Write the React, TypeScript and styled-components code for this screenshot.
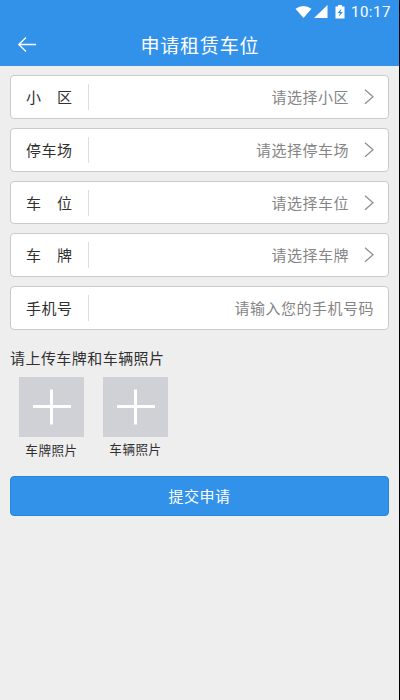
import React from "react";
import styled, { createGlobalStyle } from "styled-components";

const GlobalStyle = createGlobalStyle`
  * { box-sizing: border-box; }
  html, body { margin: 0; padding: 0; background: #eeeeee; }
  body { font-family: "Noto Sans CJK SC", sans-serif; overflow: hidden; }
`;

const Screen = styled.div`
  width: 400px;
  height: 700px;
  display: flex;
  flex-direction: column;
  background: #eeeeee;
  border-right: 1px solid #000;
`;

const Top = styled.header`
  flex: none;
  height: 66px;
  background: #3292ea;
  color: #fff;
`;

const StatusBar = styled.div`
  height: 23px;
  display: flex;
  justify-content: flex-end;
  align-items: center;
  padding-right: 8px;

  svg { display: block; }
`;

const Clock = styled.span`
  margin-left: 5px;
  width: 40px;
  font: 400 15px/22px Roboto, sans-serif;
  letter-spacing: 0.5px;
  white-space: nowrap;
`;

const NavBar = styled.div`
  height: 43px;
  display: grid;
  grid-template-columns: 54px 1fr 54px;
  align-items: center;
`;

const Back = styled.button`
  border: 0;
  background: none;
  padding: 0 0 0 17px;
  height: 43px;
  display: flex;
  align-items: center;

  svg { display: block; }
`;

const Title = styled.h1`
  margin: 0;
  font-size: 19px;
  letter-spacing: 0.8px;
  text-indent: 0.8px;
  font-weight: 400;
  line-height: 43px;
  text-align: center;
`;

const Form = styled.main`
  display: flex;
  flex-direction: column;
  padding: 9.4px 10px 0;
`;

const Fields = styled.div`
  display: flex;
  flex-direction: column;
  gap: 9.2px;
`;

const Field = styled.div`
  height: 43.5px;
  display: flex;
  align-items: center;
  padding: 0 14px 0 15px;
  background: #fff;
  border: 1px solid #cacaca;
  border-radius: 4px;
`;

const Label = styled.div`
  width: 63px;
  height: 26px;
  display: flex;
  align-items: center;
  border-right: 1px solid #dedede;
  font-size: 15px;
  letter-spacing: 0.5px;
  color: #303030;
`;

const LabelText = styled.span`
  width: 46.5px;
  display: flex;
  justify-content: space-between;
  line-height: 26px;
  white-space: nowrap;
`;

const Value = styled.div`
  flex: 1;
  text-align: right;
  font-size: 15px;
  letter-spacing: 0.5px;
  line-height: 26px;
  color: #858585;
`;

const Chevron = styled.svg`
  display: block;
  margin-left: 15px;
`;

const UploadHeading = styled.h2`
  margin: 16px 0 0;
  font-size: 15px;
  letter-spacing: 0.45px;
  font-weight: 400;
  line-height: 24px;
  color: #303030;
`;

const Uploads = styled.div`
  display: flex;
  gap: 19px;
  padding: 7px 0 0 9px;
`;

const Upload = styled.div<{ $lift?: boolean }>`
  width: 65px;
  display: flex;
  flex-direction: column;
  align-items: center;
  font-size: 12.6px;
  letter-spacing: 0.5px;
  line-height: 20px;
  color: #303030;

  span { margin-top: ${(p) => (p.$lift ? 2 : 3)}px; }
`;

const Tile = styled.div`
  width: 65px;
  height: 60px;
  background: #d0d0d7;

  svg { display: block; }
`;

const Submit = styled.button`
  height: 40px;
  margin-top: 16px;
  padding: 0;
  border: 1px solid #2386df;
  border-radius: 4px;
  background: #3292ea;
  color: #fff;
  font: 400 15px/38px "Noto Sans CJK SC", sans-serif;
  letter-spacing: 0.5px;
`;

const fields = [
  { label: "小区", value: "请选择小区", pick: true },
  { label: "停车场", value: "请选择停车场", pick: true },
  { label: "车位", value: "请选择车位", pick: true },
  { label: "车牌", value: "请选择车牌", pick: true },
  { label: "手机号", value: "请输入您的手机号码", pick: false },
];

const uploads = ["车牌照片", "车辆照片"];

export default function App() {
  return (
    <>
      <GlobalStyle />
      <Screen>
        <Top>
          <StatusBar>
            <svg width="52" height="16" viewBox="0 0 52 16" fill="#fff">
              <path d="M1.5 4.8Q9.5-.8 17.5 4.8L9.5 14Z" />
              <path d="M33.5 1v13H20Z" />
              <path
                fillRule="evenodd"
                d="M42 2.5h2V1h4v1.5h2.5V14.5H41.5V2.5Zm5.5 2-4 4.5h2.4L44.8 12.8l4-4.7h-2.4Z"
              />
            </svg>
            <Clock>10:17</Clock>
          </StatusBar>
          <NavBar>
            <Back aria-label="返回">
              <svg width="20" height="16" viewBox="0 0 20 16" fill="none" stroke="#fff" strokeWidth="1.3">
                <path d="M1.5 7.5H19M9 .5 1.8 7.5 9 14.5" />
              </svg>
            </Back>
            <Title>申请租赁车位</Title>
          </NavBar>
        </Top>
        <Form>
          <Fields>
            {fields.map((f) => (
              <Field key={f.label}>
                <Label>
                  <LabelText>
                    {f.label.length === 2
                      ? [...f.label].map((c) => <span key={c}>{c}</span>)
                      : f.label}
                  </LabelText>
                </Label>
                <Value>{f.value}</Value>
                {f.pick && (
                  <Chevron width="10" height="16" viewBox="0 0 10 16" fill="none" stroke="#8c8c8c" strokeWidth="1.2">
                    <path d="M1 .7l8 7-8 7" />
                  </Chevron>
                )}
              </Field>
            ))}
          </Fields>
          <UploadHeading>请上传车牌和车辆照片</UploadHeading>
          <Uploads>
            {uploads.map((text, i) => (
              <Upload key={text} $lift={i === 1}>
                <Tile>
                  <svg width="65" height="60" viewBox="0 0 65 60" stroke="#fff" strokeWidth="3">
                    <path d="M14 29.5H52M32.5 12.5V47.5" />
                  </svg>
                </Tile>
                <span>{text}</span>
              </Upload>
            ))}
          </Uploads>
          <Submit>提交申请</Submit>
        </Form>
      </Screen>
    </>
  );
}
